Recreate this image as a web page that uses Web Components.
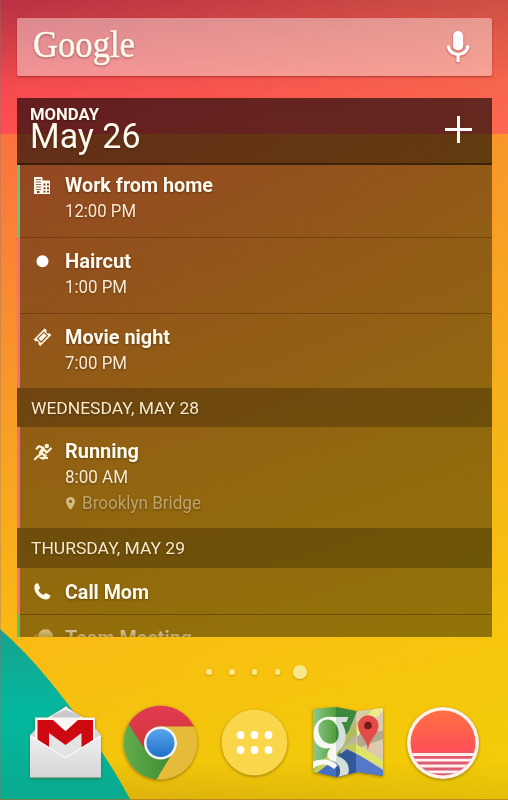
<!DOCTYPE html>
<html lang="en"><head><meta charset="utf-8"><title>Home screen</title>
<style>html,body{margin:0;height:100%;overflow:hidden}body{font-family:Roboto,"Noto Sans",sans-serif;color:#fff9ed}</style></head>
<body>
<home-screen>
  <search-bar></search-bar>
  <agenda-widget>
    <agenda-header slot="head"></agenda-header>
    <agenda-event h="72" top="27" color="#62c77c" icon="office" name="Work from home" w="148" time="12:00 PM" tw="71"></agenda-event>
    <agenda-event h="76" line color="#f36f86" icon="dot" name="Haircut" w="66" time="1:00 PM" tw="62"></agenda-event>
    <agenda-event h="75" line color="#f36f86" icon="ticket" name="Movie night" w="105" time="7:00 PM" tw="62"></agenda-event>
    <agenda-day name="WEDNESDAY, MAY 28" w="168"></agenda-day>
    <agenda-event h="101" color="#f36f77" icon="run" name="Running" w="74" time="8:00 AM" tw="63" place="Brooklyn Bridge"></agenda-event>
    <agenda-day name="THURSDAY, MAY 29" w="154"></agenda-day>
    <agenda-event h="46" color="#f07478" icon="phone" name="Call Mom" w="84"></agenda-event>
    <agenda-event h="25" line fade color="#57c766" icon="chat" name="Team Meeting" w="127"></agenda-event>
  </agenda-widget>
  <page-dots></page-dots>
  <app-dock></app-dock>
</home-screen>
<script>
const define = (name, render) => customElements.define(name, class extends HTMLElement {
  connectedCallback() {
    if (this.shadowRoot) return;
    this.attachShadow({ mode: 'open' }).innerHTML = render(this);
  }
});
const attr = (el, n) => el.getAttribute(n) || '';

/* A single line of text fitted to a given width. */
define('text-line', el => `<style>
:host{display:block;width:${attr(el,'w')}px;height:${attr(el,'h')}px;flex:none}
svg{display:block;overflow:visible}text{fill:currentColor;filter:drop-shadow(0 1px 1px #0005)}
</style><svg width="${attr(el,'w')}" height="${attr(el,'h')}"><text x="0" y="${attr(el,'base')}" font-family="${attr(el,'font')||'Roboto, sans-serif'}" font-size="${attr(el,'size')}" font-weight="${attr(el,'weight')||400}" ${el.hasAttribute('stroke')?`stroke="currentColor" stroke-width="${attr(el,'stroke')}"`:''} textLength="${attr(el,'w')}" lengthAdjust="spacingAndGlyphs">${attr(el,'text')}</text></svg>`);

define('home-screen', () => `<style>
:host{display:flex;flex-direction:column;box-sizing:border-box;width:508px;height:800px;padding:18px 16.5px 0 17.3px;position:relative;overflow:hidden;z-index:0;isolation:isolate;background:#f9c013}
.wall{position:absolute;inset:0;z-index:-1}
</style><svg class="wall" width="508" height="800"><defs>
<linearGradient id="r" gradientUnits="userSpaceOnUse" x1="0" y1="0" x2="0" y2="134"><stop offset="0" stop-color="#c33548"/><stop offset=".3" stop-color="#d84148"/><stop offset=".7" stop-color="#f84b50"/><stop offset="1" stop-color="#ff4e51"/></linearGradient>
<linearGradient id="rr" x1="0" x2="1" y1="0" y2="0"><stop offset="0" stop-color="#ff7a48" stop-opacity="0"/><stop offset="1" stop-color="#f9804c" stop-opacity=".52"/></linearGradient>
<linearGradient id="rd" x1="0" x2="0" y1="0" y2="1"><stop offset="0" stop-color="#902030" stop-opacity=".2"/><stop offset=".6" stop-color="#902030" stop-opacity="0"/></linearGradient>
<linearGradient id="o" gradientUnits="userSpaceOnUse" x1="0" y1="134" x2="0" y2="800"><stop offset="0" stop-color="#fb7240"/><stop offset=".25" stop-color="#f98b31"/><stop offset=".5" stop-color="#f8a421"/><stop offset=".75" stop-color="#f9b915"/><stop offset=".94" stop-color="#f2c30c"/><stop offset="1" stop-color="#d9af0c"/></linearGradient>
<linearGradient id="oo" x1="0" x2="1" y1="0" y2="0"><stop offset="0" stop-color="#ffe000" stop-opacity="0"/><stop offset="1" stop-color="#f2dc00" stop-opacity=".34"/></linearGradient>
<linearGradient id="t" x1="0" x2="0" y1="0" y2="1"><stop offset="0" stop-color="#17a28d"/><stop offset=".5" stop-color="#03b89e"/><stop offset="1" stop-color="#09a98d"/></linearGradient></defs>
<path fill="url(#r)" d="M0 0h508v134H0z"/><path fill="url(#rr)" d="M0 0h508v134H0z"/><path fill="url(#rd)" d="M0 0h508v134H0z"/>
<path fill="url(#o)" d="M0 134h508v666H0z"/><path fill="url(#oo)" d="M0 134h508v666H0z"/>
<path fill="url(#t)" d="M0 629Q25 651 48 679Q99 741 130.500 800H0z"/><path d="M0 799.500h508" stroke="#ad742b" opacity=".65"/><path d="M.5 0v800" stroke="#8c7770" opacity=".35"/></svg><slot></slot>`);

define('search-bar', () => `<style>
:host{display:flex;box-sizing:border-box;height:57.500px;flex:none;justify-content:space-between;padding:0 21px 0 16px;border-radius:2px;background:#ffffff68;box-shadow:0 1px 2px #6b101080}
.mic{margin-top:12px;filter:drop-shadow(0 1px 1px #9007)}
</style><text-line text="Google" font="Liberation Serif, serif" size="37" stroke=".5" w="102" h="57" base="39"></text-line>
<svg class="mic" width="26" height="34" viewBox="0 0 26 34"><rect x="8" y="1" width="10.200" height="19.500" rx="5.100" fill="#fff"/><path d="M3.300 15.500c.3 5.500 4.400 9 9.800 9s9.500-3.500 9.800-9M13.100 24.500V32" fill="none" stroke="#fff" stroke-width="3.200"/></svg>`);

define('agenda-widget', () => `<style>
:host{display:flex;flex-direction:column;box-sizing:border-box;height:539.500px;margin-top:22px;flex:none;overflow:hidden;background:#00000069}
</style><slot name="head"></slot><slot></slot>`);

define('agenda-header', () => `<style>
:host{display:flex;box-sizing:border-box;height:67.500px;flex:none;justify-content:space-between;padding:0 19.500px 0 12.700px;background:#00000052;border-bottom:2px solid #0006}
svg{margin-top:18.500px}
</style><div><text-line text="MONDAY" weight="700" size="17.200" w="69" h="22" base="22"></text-line><text-line text="May 26" size="35" w="110.500" h="36" base="28"></text-line></div>
<svg width="27" height="28"><path d="M13.500 0v27M0 13.500h27" stroke="#fff" stroke-width="3"/></svg>`);

define('agenda-day', el => `<style>:host{display:flex;height:39.300px;flex:none;padding-left:14.200px;background:#0000003d;color:#faeacb}</style>
<text-line text="${attr(el,'name')}" size="17.400" w="${attr(el,'w')}" h="39" base="26"></text-line>`);

const icons = {
 office:'<path fill="#fff9ed" d="M0 0h8.500v3.500H16V17H0z"/><path d="M2 2.500h5M2 5h5M2 7.500h5M2 10h5M2 12.500h5" stroke="#9b6450" stroke-width="1.100"/><path d="M9.500 6.500h2v2h-2zm3.500 0h2v2h-2zM9.500 10.200h2v2h-2zm3.500 0h2v2h-2zM9.500 13.800h2v1.700h-2zm3.500 0h2v1.700h-2zM3 14h2.500v2H3z" fill="#82412a"/>',
 dot:'<circle cx="8.500" cy="8.200" r="6" fill="#fff"/>',
 ticket:'<g transform="translate(8.500 8.200) rotate(-45)"><path fill="#fff6e6" d="M-7.800-4.700H7.800v3a1.700 1.700 0 0 0 0 3.400v3H-7.800v-3a1.700 1.700 0 0 0 0-3.400z"/><path d="M-4.500-2.500h9v5h-9z" fill="none" stroke="#92541a" stroke-width="1.100"/></g>',
 run:'<circle cx="12.800" cy="3" r="2.200" fill="#fff5df"/><path d="M2 6.300 5 3.200l4.300 1.600L5.800 9.800l6 3-3.600 3.600M6.500 11.500 4.300 13l-4 3.700M9.800 6l2.700 3.700L17.500 5" fill="none" stroke="#fff5df" stroke-width="2.200" stroke-linejoin="round"/><path d="m7.500 5 3.300 1.500-3.300 5-2.500-1.500zM4.500 14l9.500 0v2H7z" fill="#fff5df"/>',
 phone:'<path fill="#fff9e8" d="M.5 2.800C1.300 1 2.800.2 4.100.4l2.200 4.600-2 2.300c1.100 2.200 2.800 3.700 5.100 4.700l2.300-1.900 4.800 2.500c-.2 2.300-2 4-4.300 4C5.700 16.300-.7 9.500.5 2.800z"/>',
 chat:'<path d="M4 7.500C4 3.500 7.500.2 11.500.2s7.500 3.300 7.500 7.300V15H4z" fill="#fff0c4"/><path d="M-1 9.500C-1 7 1 5.500 3 5.500V12z" fill="#d9bd76"/>'
};
define('agenda-event', el => {
 const top = +(attr(el,'top') || 31), has = n => el.hasAttribute(n);
 return `<style>
:host{display:flex;box-sizing:border-box;height:${attr(el,'h')}px;flex:none;overflow:hidden;border-left:3px solid ${attr(el,'color')};padding-left:14px;${has('line')?'background:linear-gradient(#4a290075 1.300px,#0000 1.300px);':''}}
.icon{width:31.200px;flex:none;padding-top:${top-15.500}px}svg{display:block;overflow:visible}
.time{color:#fbe9d1}.place{display:flex;gap:7px;color:#bea36a;margin-left:1px}.place svg{margin-top:8px}
${has('fade')?'.icon,.body{opacity:.7;-webkit-mask:linear-gradient(#000 55%,#0006 100%);mask:linear-gradient(#000 55%,#0006 100%)}.icon{margin-left:-4px;padding-left:4px}':''}
</style><div class="icon"><svg width="19" height="19">${icons[attr(el,'icon')]}</svg></div>
<div class="body"><text-line text="${attr(el,'name')}" weight="700" size="19.500" w="${attr(el,'w')}" h="${has('fade')?25:top+5}" base="${top-.4}"></text-line>
${has('time')?`<text-line class="time" text="${attr(el,'time')}" size="17.500" w="${attr(el,'tw')}" h="26" base="20.300"></text-line>`:''}
${has('place')?`<div class="place"><svg width="9" height="13"><path fill="#d4bb83" fill-rule="evenodd" d="M4.500 0C2 0 0 2 0 4.500 0 7.500 4.500 13 4.500 13S9 7.500 9 4.500C9 2 7 0 4.500 0zm0 2.700a1.700 1.700 0 1 1 0 3.400 1.700 1.700 0 0 1 0-3.400z"/></svg><text-line text="${attr(el,'place')}" size="17.500" w="119" h="26" base="20"></text-line></div>`:''}</div>`;
});

define('page-dots', () => `<style>:host{display:flex;align-items:center;gap:17.200px;height:16px;margin-top:27px;padding-left:189px;flex:none}
i{width:5.600px;height:5.600px;border-radius:50%;background:#fce88e;box-shadow:0 1px 2px #a8780090}i:last-child{width:13.500px;height:13.500px;margin-left:-4px;background:#fbe68c}</style><i></i><i></i><i></i><i></i><i></i>`);

define('app-dock', () => `<style>:host{display:flex;height:78px;margin-top:24px;margin-left:10.700px;flex:none}
svg{display:block;flex:none;overflow:visible;filter:drop-shadow(0 1px 1.500px #6b4c00a0)}.chrome{margin-left:18px}.apps{margin-left:20px}.maps{margin-left:18.500px}.sun{margin-left:18px}</style>
<svg class="gmail" width="76" height="78" viewBox="28 704 76 78"><defs><linearGradient id="e" x1="0" y1="0" x2="0" y2="1"><stop stop-color="#f0f0ef"/><stop offset="1" stop-color="#d5d5d7"/></linearGradient></defs>
<path fill="#d8d5d3" d="m30 735 5-5 31-24 31 24 4 5v42H30z"/><path fill="#eee" d="m65.500 707 18 11H47z"/><path fill="#c9c9cb" d="m53 715 12.500-5L80 715v4H51z"/><path fill="#fbf5f2" d="M35 717.500h60v40H35z"/>
<path fill="#e4e4e4" d="M47 730h38v28H47z"/><path fill="#faf6f4" d="m53 720 12.500 11L78 720z"/><path fill="#cd0810" d="M37.500 720H53l12.500 11.200L78 720h15v26l-11.500 6v-19L65.500 745 49 733v19l-11.500-6z"/><path fill="url(#e)" d="m30 735 35.500 22.500L101 735v42.500H30z"/><path d="m31 736 34.500 22L100 736" fill="none" stroke="#fff"/></svg>
<svg class="chrome" width="76" height="78" viewBox="122 704 76 78"><defs><linearGradient id="cr" x1="0" y1="0" x2="0" y2="1"><stop stop-color="#e13b53"/><stop offset="1" stop-color="#d23736"/></linearGradient><linearGradient id="cg"><stop stop-color="#63ad4b"/><stop offset="1" stop-color="#3c8a35"/></linearGradient><linearGradient id="cb" x1="0" y1="0" x2="0" y2="1"><stop stop-color="#59a5ed"/><stop offset="1" stop-color="#1e70c8"/></linearGradient></defs>
<circle cx="160.200" cy="742.500" r="37.200" fill="#e5bb39"/><path fill="url(#cg)" d="M128.500 724A37.200 37.200 0 0 0 156.500 779.500L173 752 145 747z"/><path fill="url(#cr)" d="M128.500 724a37.200 37.200 0 0 1 65.500 2.500h-34L144 748z"/><circle cx="160.500" cy="743" r="16.500" fill="#f5f6f7"/><circle cx="160.500" cy="743" r="14" fill="url(#cb)"/></svg>
<svg class="apps" width="76" height="78" viewBox="218 704 76 78"><circle cx="254.500" cy="742.500" r="33" fill="#fad64a"/><g fill="#fff"><circle cx="240.500" cy="735" r="3.900"/><circle cx="254.500" cy="735" r="3.900"/><circle cx="268.500" cy="735" r="3.900"/><circle cx="240.500" cy="750" r="3.900"/><circle cx="254.500" cy="750" r="3.900"/><circle cx="268.500" cy="750" r="3.900"/></g></svg>
<svg class="maps" width="76" height="78" viewBox="313 704 76 78"><defs><clipPath id="m"><path d="m314 709 23-2 20 4 27-3v68l-26-4-20 5-24-5z"/></clipPath><linearGradient id="mg"><stop stop-color="#91c88b"/><stop offset="1" stop-color="#4b9e38"/></linearGradient></defs><g clip-path="url(#m)"><path fill="url(#mg)" d="M314 705h24v73h-24z"/><path fill="#399131" d="M337 705h21v73h-21z"/><path fill="#d9c6a8" d="m384 707-26 4-17 42 43 17z"/><path fill="#aca183" d="m357 733 27-2v8l-25 9z"/><path fill="#c7cd5d" d="m384 707-30 30-17 19-19 22h-10l29-32 21-24 17-15z"/><path fill="#e8eb83" d="m384 706-8 1-18 19v11l26-26z"/><path fill="#456dc4" d="m348 749 9 4 27 17v7l-26-4-20 5-20-5 19-15z"/><path fill="#2d54a2" d="m337 758 10-8 10 4v20l-20 4z"/><path fill="#dbe25b" d="m345 747 10-4 29 17v8z"/>
<path fill="#f6faf2" fill-rule="evenodd" d="M349.500 717h-14c-13-2-21 5-21 17 0 11 8 16 17 14-5 6-4 10 2 13 6 2 9 7 7 14l-3 4h9c7-10 2-19-6-22-4-2-4-4 0-7 8-7 8-18 2-28h5zm-18 3c9 3 11 19 4 23-7 3-15-3-16-12-1-8 5-13 12-11z"/><path fill="#f8faf4" d="M312 763c7-5 18-5 27 2l-4 4c-8-7-15-5-23 1z"/><path fill="#4b6b7530" d="M337 705h20v75h-20z"/><path fill="#ffffff16" d="M357 705h27v75h-27z"/></g><path fill="#e54b48" d="M369 751c-1-13-10-16-10-25.500a10 10 0 0 1 20.500 0C379.500 735 370 738 369 751z"/><circle cx="369" cy="725.500" r="3.800" fill="#711c18"/></svg>
<svg class="sun" width="74" height="78" viewBox="407 704 74 78"><defs><linearGradient id="s" x1="0" y1="0" x2="0" y2="1"><stop stop-color="#ff7043"/><stop offset=".62" stop-color="#ff5058"/><stop offset=".68" stop-color="#df5b71"/><stop offset="1" stop-color="#d65f79"/></linearGradient><clipPath id="sc"><circle cx="444" cy="743" r="32.500"/></clipPath></defs><circle cx="444" cy="743" r="36" fill="#fff2e7"/><circle cx="444" cy="743" r="32.500" fill="url(#s)"/><path clip-path="url(#sc)" d="M407 754.500h74M407 760.200h74M407 766h74M407 771.800h74" stroke="#fff0ed" stroke-width="2.800"/></svg>`);
</script></body></html>
